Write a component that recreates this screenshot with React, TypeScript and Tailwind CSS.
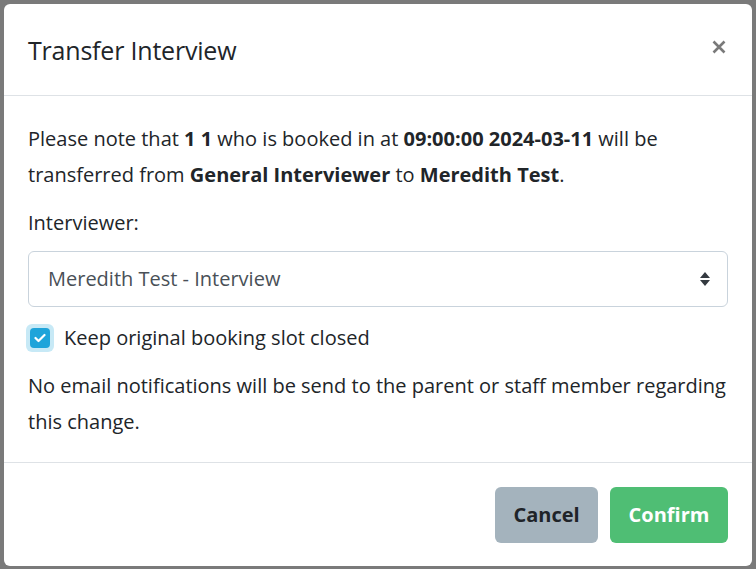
import React from "react";

const App = () => {
  return (
    <div className="w-[756px] h-[569px] bg-[#7a7a7a] p-[4px] font-['Open_Sans',sans-serif] text-[#212529]">
      <div className="bg-white rounded-[6px] h-[562px] w-[748px] flex flex-col">
        <div className="h-[92px] flex items-center justify-between px-6 border-b border-[#dee2e6]">
          <h2 className="text-[25px] font-normal tracking-[-0.2px] mt-[2px]">Transfer Interview</h2>
          <button className="leading-none mr-[2px] -mt-[6px]">
            <svg width="14" height="14" viewBox="0 0 14 14">
              <path d="M1.5 1.5L12.5 12.5M12.5 1.5L1.5 12.5" stroke="#7a7a7a" strokeWidth="2.6" />
            </svg>
          </button>
        </div>
        <div className="px-6 pt-[25px] flex-1 text-[20px] leading-[36px]">
          <p>
            Please note that <b>1 1</b> who is booked in at <b>09:00:00 2024-03-11</b> will be
            transferred from <b>General Interviewer</b> to <b>Meredith Test</b>.
          </p>
          <div className="mt-[12px]">Interviewer:</div>
          <div className="mt-[10px] h-[56px] border border-[#c9d3dc] rounded-[6px] flex items-center justify-between pl-[19px] pr-[16px] text-[#495057]">
            <span>Meredith Test - Interview</span>
            <svg width="12" height="16" viewBox="0 0 12 16">
              <path d="M6 1L11 7H1Z M1 9H11L6 15Z" fill="#343a40" />
            </svg>
          </div>
          <label className="mt-[13px] flex items-center gap-[10px] -ml-[2px]">
            <span className="w-[28px] h-[28px] rounded-[6px] bg-[#c7e9f6] flex items-center justify-center">
              <span className="w-[20px] h-[20px] rounded-[4px] bg-[#1fa4da] flex items-center justify-center">
                <svg width="12" height="10" viewBox="0 0 12 10">
                  <path d="M1.5 5L4.5 8L10.5 2" stroke="white" strokeWidth="2.2" fill="none" strokeLinecap="round" strokeLinejoin="round" />
                </svg>
              </span>
            </span>
            <span>Keep original booking slot closed</span>
          </label>
          <p className="mt-[12px]">
            No email notifications will be send to the parent or staff member regarding this change.
          </p>
        </div>
        <div className="h-[104px] border-t border-[#dee2e6] flex items-center justify-end gap-3 px-6">
          <button className="h-[56px] w-[103px] rounded-[6px] bg-[#a4b3bd] font-bold text-[20px] text-[#1f2429]">Cancel</button>
          <button className="h-[56px] w-[118px] rounded-[6px] bg-[#4fbe74] font-bold text-[20px] text-white">Confirm</button>
        </div>
      </div>
    </div>
  );
};

export default App;
